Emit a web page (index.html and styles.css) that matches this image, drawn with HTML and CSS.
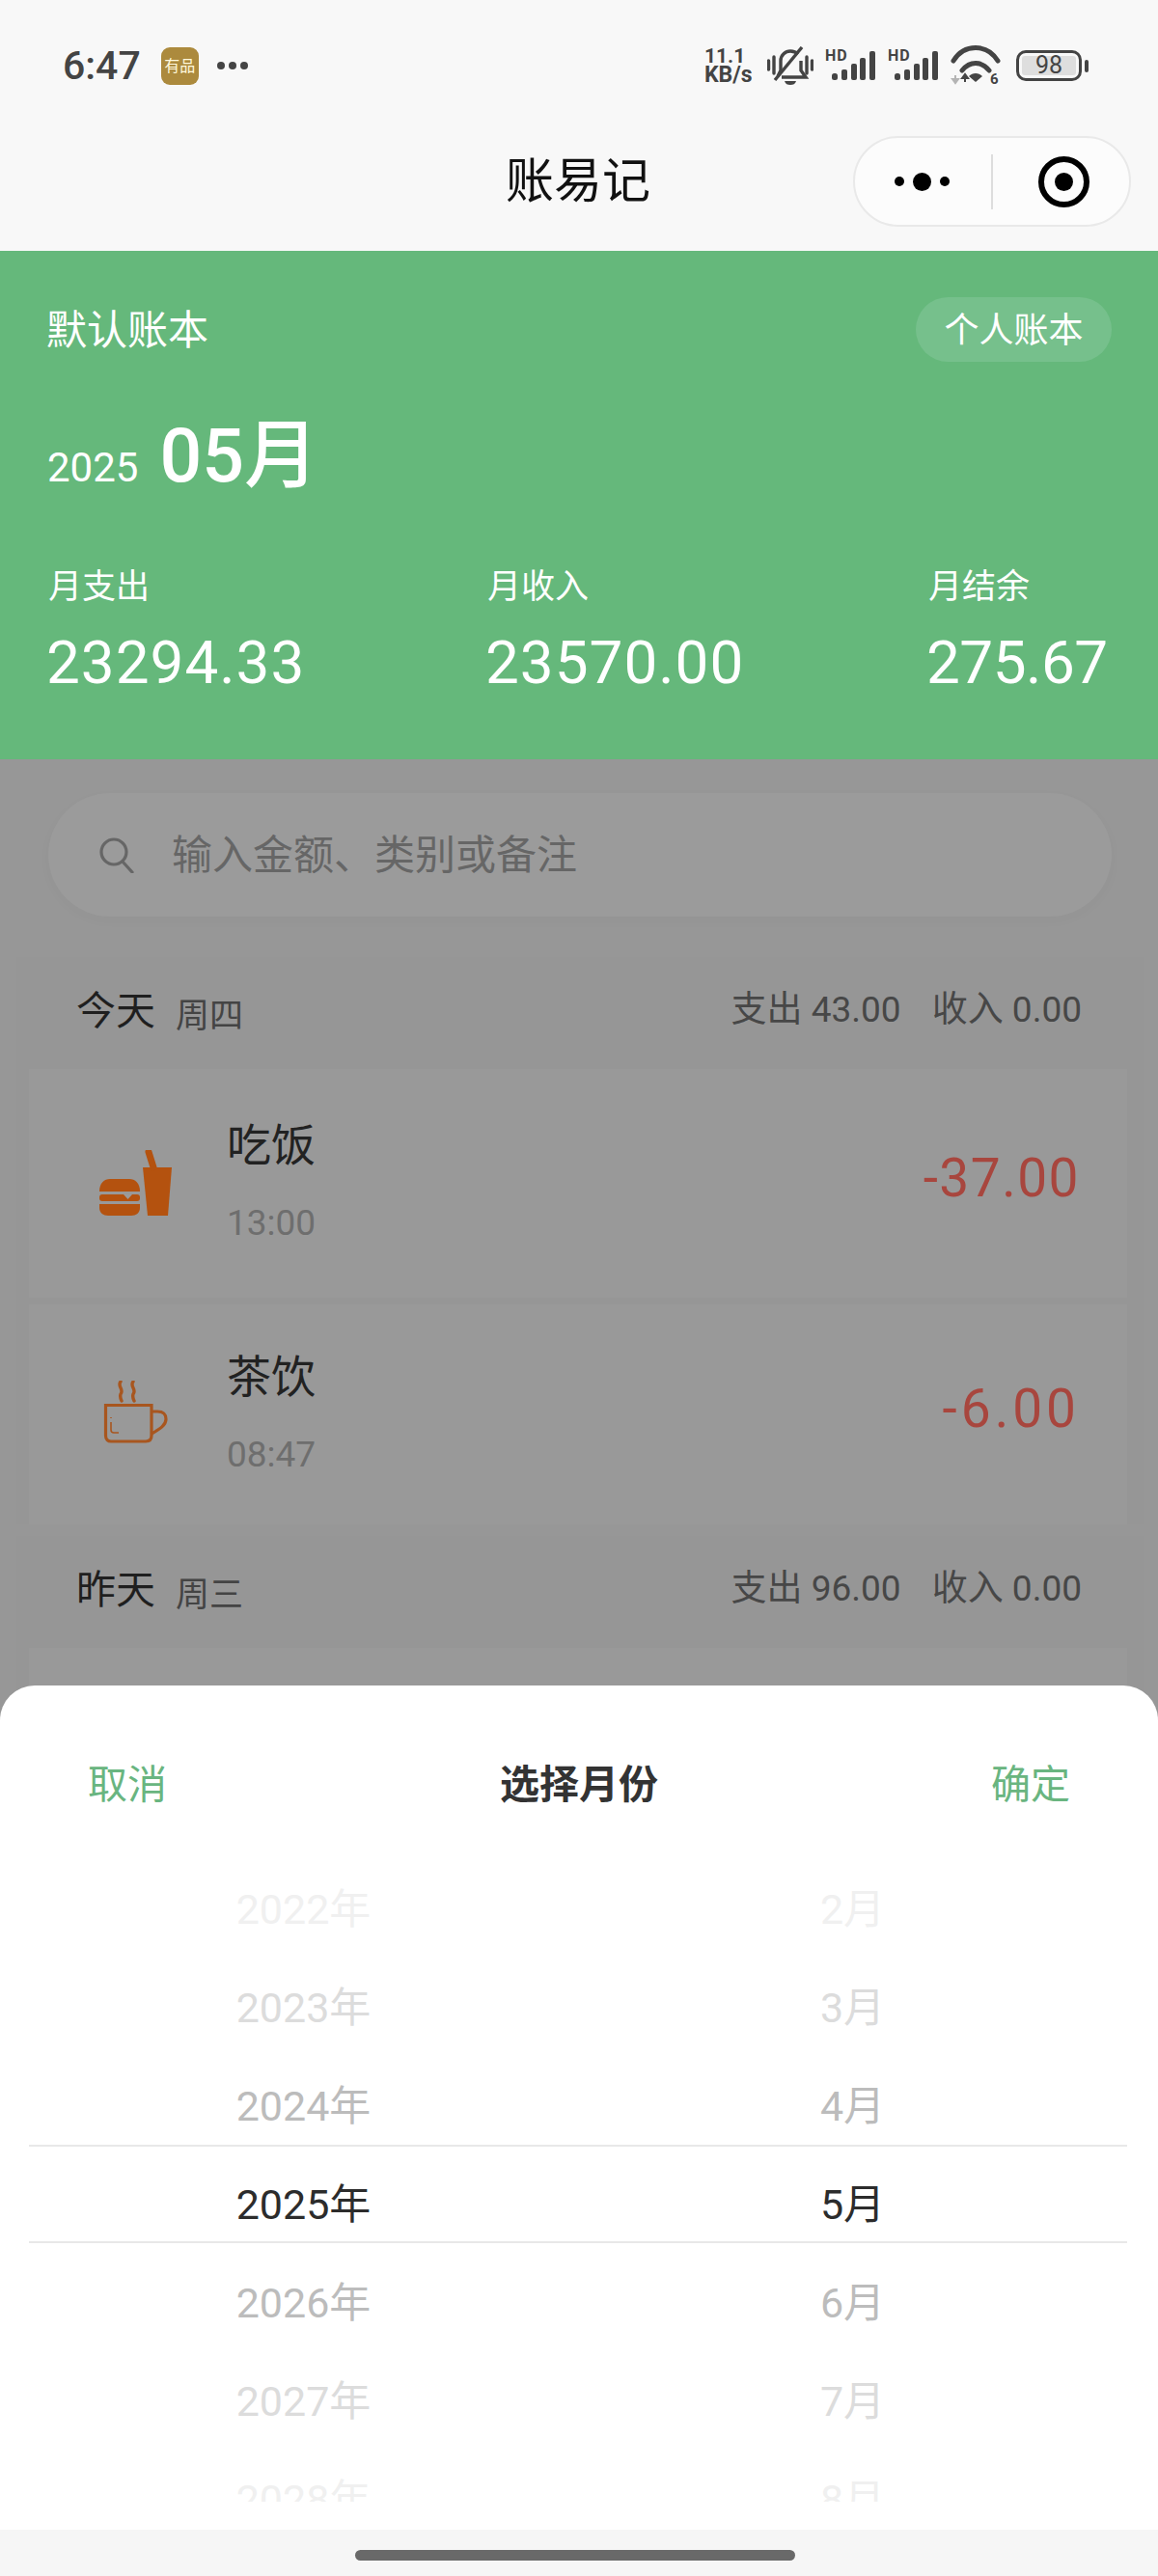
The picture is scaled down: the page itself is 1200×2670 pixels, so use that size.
FILE: index.html
```html
<!DOCTYPE html>
<html lang="zh-CN">
<head>
    <meta charset="UTF-8">
    <meta name="viewport" content="width=device-width, initial-scale=1.0">
    <title>账易记</title>
    <link rel="stylesheet" href="styles.css">
</head>
<body>
<div class="screen">
    <div class="status-bar">
        <div class="status-left">
            <span class="clock">6:47</span>
            <span class="app-badge">有品</span>
            <span class="status-dots"><i></i><i></i><i></i></span>
        </div>
        <div class="status-right">
            <div class="net-speed"><span>11.1</span><span class="net-unit">KB/s</span></div>
            <svg class="icon-bell" width="48" height="40" viewBox="0 0 48 40" fill="none" stroke="#444" stroke-width="3.4">
                <path d="M11 31l3-6V15c0-6 5-10 10-10 3 0 6 1 8 3M35 15v10l5 7H15"/>
                <path d="M36 1L8 35"/>
                <path d="M1.5 15v9M7 11v17M41 11v17M46.500 15v9" stroke-linecap="round"/>
                <path d="M18 36h12c-1 3-3 4-6 4s-5-1-6-4z" fill="#444" stroke="none"/>
            </svg>
            <svg class="icon-signal" width="53" height="38" viewBox="0 0 53 38">
                <text x="0" y="17" class="svg-small">HD</text>
                <rect x="7" y="30" width="6" height="7" rx="2.500" fill="#444"/>
                <rect x="17" y="26" width="6" height="11" rx="2" fill="#444"/>
                <rect x="27" y="20" width="6" height="17" rx="2" fill="#444"/>
                <rect x="36" y="14" width="6" height="23" rx="2" fill="#444"/>
                <rect x="46" y="7" width="6" height="30" rx="2" fill="#444"/>
            </svg>
            <svg class="icon-signal" width="53" height="38" viewBox="0 0 53 38">
                <text x="0" y="17" class="svg-small">HD</text>
                <rect x="7" y="30" width="6" height="7" rx="2.500" fill="#444"/>
                <rect x="17" y="26" width="6" height="11" rx="2" fill="#444"/>
                <rect x="27" y="20" width="6" height="17" rx="2" fill="#444"/>
                <rect x="36" y="14" width="6" height="23" rx="2" fill="#444"/>
                <rect x="46" y="7" width="6" height="30" rx="2" fill="#444"/>
            </svg>
            <svg class="icon-wifi" width="52" height="46" viewBox="0 0 52 46" fill="none" stroke="#444" stroke-width="5">
                <g transform="translate(0 3)">
                    <path d="M3 15C14-3 38-3 49 15" stroke-linecap="round"/>
                    <path d="M12 25C20 15 32 15 40 25" stroke-linecap="round"/>
                    <path d="M19 31c4-4 10-4 14 0l-7 6z" fill="#444" stroke="none"/>
                    <path d="M5 30v5M2 34l3 4 3-4z" stroke="#b4b4b4" stroke-width="2" fill="#b4b4b4"/>
                    <path d="M15 37v-5M12 33l3-4 3 4z" stroke="#444" stroke-width="2" fill="#444"/>
                </g>
                <text x="41" y="42" class="svg-six">6</text>
            </svg>
            <div class="battery">
                <div class="battery-body"><span class="battery-level">98</span></div>
                <i class="battery-nub"></i>
            </div>
        </div>
    </div>

    <div class="nav-bar">
        <div class="nav-title">账易记</div>
        <div class="capsule">
            <div class="capsule-more"><i></i><i class="big"></i><i></i></div>
            <div class="capsule-line"></div>
            <div class="capsule-target"><i></i></div>
        </div>
    </div>

    <div class="summary">
        <div class="book-row">
            <span class="book-name">默认账本</span>
            <span class="book-chip">个人账本</span>
        </div>
        <div class="month-row">
            <span class="year">2025</span>
            <span class="month">05月</span>
        </div>
        <div class="totals">
            <div class="total">
                <div class="total-label">月支出</div>
                <div class="total-value">23294.33</div>
            </div>
            <div class="total">
                <div class="total-label">月收入</div>
                <div class="total-value">23570.00</div>
            </div>
            <div class="total">
                <div class="total-label">月结余</div>
                <div class="total-value tight">275.67</div>
            </div>
        </div>
    </div>

    <div class="content">
        <div class="search">
            <svg width="38" height="38" viewBox="0 0 38 38" fill="none" stroke="#666" stroke-width="3.200">
                <circle cx="16" cy="16" r="13"/>
                <path d="M25 26l10 11" stroke-linecap="round"/>
            </svg>
            <span class="search-hint">输入金额、类别或备注</span>
        </div>

        <div class="day">
            <div class="day-head">
                <div class="day-name"><b>今天</b><span>周四</span></div>
                <div class="day-stats"><span>支出 43.00</span><span>收入 0.00</span></div>
            </div>
            <div class="row">
                <svg class="row-icon" width="80" height="70" viewBox="0 0 80 70" fill="#b4520f">
                    <path d="M3 43c0-9 5-13 11-13h20c6 0 11 4 11 13z"/>
                    <rect x="3" y="46" width="42" height="7" rx="3"/>
                    <path d="M28 46h9l-4.500 5z" fill="#9b9b9b"/>
                    <path d="M3 56h42v4c0 5-4 8-9 8H12c-5 0-9-3-9-8z"/>
                    <path d="M48 18h30l-4 50H53z"/>
                    <path d="M54 2l5 16" stroke="#b4520f" stroke-width="7" stroke-linecap="round"/>
                </svg>
                <div class="row-text">
                    <div class="row-name">吃饭</div>
                    <div class="row-time">13:00</div>
                </div>
                <div class="row-amount">-37.00</div>
            </div>
            <div class="row">
                <svg class="row-icon" width="80" height="70" viewBox="0 0 80 70" fill="none" stroke="#a8561f" stroke-width="3.200">
                    <path d="M9.500 25.500H57V57c0 4-2 6-6 6H15c-3 0-5.500-2-5.500-6z"/>
                    <path d="M57 32h6c7 0 9 3 9 8 0 6-6 10-15 15"/>
                    <path d="M25 1c-4 5 4 8 0 13-1 3 0 5 1 7M38 1c-4 5 4 8 0 13-1 3 0 5 1 7" stroke-width="3.400" stroke-linecap="round"/>
                    <path d="M15 38v1M15 43v8c0 2 1 3 3 3h5" stroke-width="1.600"/>
                </svg>
                <div class="row-text">
                    <div class="row-name">茶饮</div>
                    <div class="row-time">08:47</div>
                </div>
                <div class="row-amount wide">-6.00</div>
            </div>
        </div>

        <div class="day">
            <div class="day-head">
                <div class="day-name"><b>昨天</b><span>周三</span></div>
                <div class="day-stats"><span>支出 96.00</span><span>收入 0.00</span></div>
            </div>
            <div class="row"></div>
        </div>
    </div>

    <div class="sheet">
        <div class="sheet-head">
            <span class="sheet-action">取消</span>
            <span class="sheet-title">选择月份</span>
            <span class="sheet-action">确定</span>
        </div>
        <div class="picker">
            <div class="picker-row fade-3"><span>2022年</span><span>2月</span></div>
            <div class="picker-row fade-2"><span>2023年</span><span>3月</span></div>
            <div class="picker-row fade-1"><span>2024年</span><span>4月</span></div>
            <div class="picker-row selected"><span>2025年</span><span>5月</span></div>
            <div class="picker-row fade-1"><span>2026年</span><span>6月</span></div>
            <div class="picker-row fade-2"><span>2027年</span><span>7月</span></div>
            <div class="picker-row fade-3"><span>2028年</span><span>8月</span></div>
        </div>
    </div>

    <div class="home-bar"><i></i></div>
</div>
</body>
</html>
```

FILE: styles.css
```css
* {
    box-sizing: border-box;
}
body {
    margin: 0;
    font-family: Roboto, "Noto Sans CJK SC", sans-serif;
    background-color: #979797;
}
i {
    display: block;
}
.screen {
    position: relative;
    display: flex;
    flex-direction: column;
    width: 1200px;
    height: 2670px;
    overflow: hidden;
}

/* status bar */
.status-bar {
    display: flex;
    justify-content: space-between;
    align-items: center;
    height: 116px;
    padding: 20px 72px 0 65px;
    background-color: #f8f8f8;
    color: #444;
}
.status-left {
    display: flex;
    align-items: center;
}
.clock {
    font-size: 41px;
    font-weight: 500;
    line-height: 50px;
}
.app-badge {
    width: 39px;
    height: 39px;
    margin-left: 21px;
    border-radius: 9px;
    background-color: #ac8a3d;
    color: #fff8dc;
    font-size: 16px;
    line-height: 39px;
    text-align: center;
}
.status-dots {
    display: flex;
    gap: 4px;
    margin-left: 19px;
}
.status-dots i {
    width: 8px;
    height: 8px;
    border-radius: 50%;
    background-color: #444;
}
.status-right {
    display: flex;
    align-items: center;
    gap: 12px;
}
.net-speed {
    display: flex;
    flex-direction: column;
    width: 53px;
    font-size: 21px;
    font-weight: 700;
    line-height: 20px;
}
.net-unit {
    font-size: 23px;
}
.icon-signal {
    margin-bottom: 6px;
}
.battery {
    display: flex;
    align-items: center;
    gap: 3px;
    margin-left: 4px;
}
.battery-body {
    width: 68px;
    height: 32px;
    padding: 3px;
    border: 3px solid #444;
    border-radius: 10px;
}
.battery-level {
    display: block;
    height: 20px;
    border-radius: 3px;
    background-color: #dedede;
    font-size: 25px;
    line-height: 20px;
    text-align: center;
}
.battery-nub {
    width: 4px;
    height: 13px;
    border-radius: 2px;
    background-color: #444;
}
.svg-small {
    font-size: 16px;
    font-weight: 700;
    letter-spacing: 1px;
    fill: #444;
}
.svg-six {
    font-size: 15px;
    font-weight: 700;
    fill: #444;
    stroke: none;
}

/* nav bar */
.nav-bar {
    position: relative;
    display: flex;
    justify-content: center;
    align-items: center;
    height: 144px;
    background-color: #f8f8f8;
}
.nav-title {
    margin: 0 2px 10px 0;
    color: #111;
    font-size: 50px;
}
.capsule {
    position: absolute;
    top: 25px;
    right: 28px;
    display: flex;
    align-items: center;
    width: 288px;
    height: 94px;
    border: 2px solid #e9e9e9;
    border-radius: 47px;
    background-color: #fcfcfc;
}
.capsule-more {
    display: flex;
    align-items: center;
    gap: 9px;
    margin-left: 41px;
}
.capsule-more i {
    width: 10px;
    height: 10px;
    border-radius: 50%;
    background-color: #000;
}
.capsule-more i.big {
    width: 19px;
    height: 19px;
}
.capsule-line {
    width: 2px;
    height: 57px;
    margin-left: 43px;
    background-color: #ddd;
}
.capsule-target {
    display: flex;
    justify-content: center;
    align-items: center;
    width: 53px;
    height: 53px;
    margin-left: 47px;
    border: 6px solid #000;
    border-radius: 50%;
}
.capsule-target i {
    width: 19px;
    height: 19px;
    border-radius: 50%;
    background-color: #000;
}

/* green summary */
.summary {
    height: 527px;
    padding: 48px 48px 0 50px;
    background-color: #65b87b;
    color: #fff;
}
.book-row {
    display: flex;
    justify-content: space-between;
    align-items: center;
    height: 67px;
}
.book-name {
    margin: 0 0 6px -2px;
    font-size: 42px;
}
.book-chip {
    width: 203px;
    height: 67px;
    border-radius: 34px;
    background-color: #76c08c;
    font-size: 36px;
    line-height: 70px;
    text-align: center;
}
.month-row {
    display: flex;
    align-items: baseline;
    gap: 22px;
    height: 90px;
    margin: 53px 0 0 -1px;
    line-height: 90px;
}
.year {
    font-size: 42px;
}
.month {
    font-size: 77px;
    font-weight: 500;
}
.totals {
    display: grid;
    grid-template-columns: 455px 457px auto;
    margin-top: 69px;
}
.total-label {
    font-size: 35px;
    line-height: 44px;
}
.total-value {
    margin: 24px 0 0 -2px;
    font-size: 62px;
    font-weight: 450;
    line-height: 64px;
    letter-spacing: 1px;
}
.total-value.tight {
    letter-spacing: -0.5px;
}

/* list under the dim layer */
.content {
    flex: 1;
    min-height: 0;
    overflow: hidden;
}
.search {
    display: flex;
    align-items: center;
    gap: 38px;
    height: 128px;
    margin: 35px 48px 0 50px;
    padding: 0 0 0 52px;
    border-radius: 64px;
    background-color: #9b9b9b;
    box-shadow: 0 4px 14px rgba(0, 0, 0, 0.025);
    color: #666;
    font-size: 42px;
}
.search-hint {
    margin-bottom: 8px;
}
.day {
    margin: 12px 14px 0 17px;
    background-color: #969696;
}
.search + .day {
    margin-top: 42px;
}
.day-head {
    display: flex;
    justify-content: space-between;
    align-items: center;
    height: 116px;
    padding: 0 65px 6px 62px;
}
.day-name {
    display: flex;
    align-items: center;
    gap: 21px;
}
.day-name b {
    margin-bottom: 6px;
    color: #1f1f1f;
    font-size: 41px;
    font-weight: 400;
}
.day-name span {
    margin-top: 4px;
    color: #444;
    font-size: 35px;
}
.day-stats {
    display: flex;
    gap: 32px;
    margin-bottom: 8px;
    color: #474747;
    font-size: 37px;
}
.row {
    display: flex;
    align-items: center;
    height: 237px;
    margin: 0 18px 0 13px;
    padding: 0 49px 0 70px;
    background-color: #999;
}
.row + .row {
    height: 228px;
    margin-top: 7px;
}
.row-icon {
    flex-shrink: 0;
    margin-right: 55px;
}
.row-text {
    flex: 1;
}
.row-name {
    color: #222;
    font-size: 46px;
    line-height: 56px;
}
.row-time {
    margin-top: 27px;
    color: #6e6e6e;
    font-size: 37px;
    line-height: 52px;
}
.row-amount {
    margin-bottom: 12px;
    color: #a8463e;
    font-size: 55px;
    font-weight: 450;
    letter-spacing: 1.5px;
}
.row-amount.wide {
    letter-spacing: 4px;
}

/* month picker */
.sheet {
    position: absolute;
    left: 0;
    right: 0;
    bottom: 48px;
    height: 875px;
    border-radius: 36px 36px 0 0;
    background-color: #fff;
}
.sheet-head {
    display: flex;
    justify-content: space-between;
    height: 170px;
    padding: 78px 91px 0 91px;
    font-size: 41px;
    line-height: 50px;
}
.sheet-action {
    color: #69b580;
}
.sheet-title {
    color: #333;
    font-weight: 700;
}
.picker {
    height: 676px;
    margin: 0 32px 0 30px;
    overflow: hidden;
}
.picker-row {
    display: grid;
    grid-template-columns: 1fr 1fr;
    height: 102px;
    padding-top: 24px;
    font-size: 43px;
    line-height: 76px;
    text-align: center;
}
.picker-row.selected {
    padding-top: 22px;
    border-top: 2px solid #e8e8e8;
    border-bottom: 2px solid #e8e8e8;
    color: #2c2c2c;
}
.fade-1 {
    color: #bcbcbc;
}
.fade-2 {
    color: #dcdcdc;
}
.fade-3 {
    color: #f0f0f0;
}

/* gesture bar */
.home-bar {
    position: relative;
    display: flex;
    justify-content: center;
    align-items: center;
    height: 48px;
    padding: 4px 8px 0 0;
    background-color: #f6f6f6;
}
.home-bar i {
    width: 456px;
    height: 11px;
    border-radius: 6px;
    background-color: #696969;
}
```
